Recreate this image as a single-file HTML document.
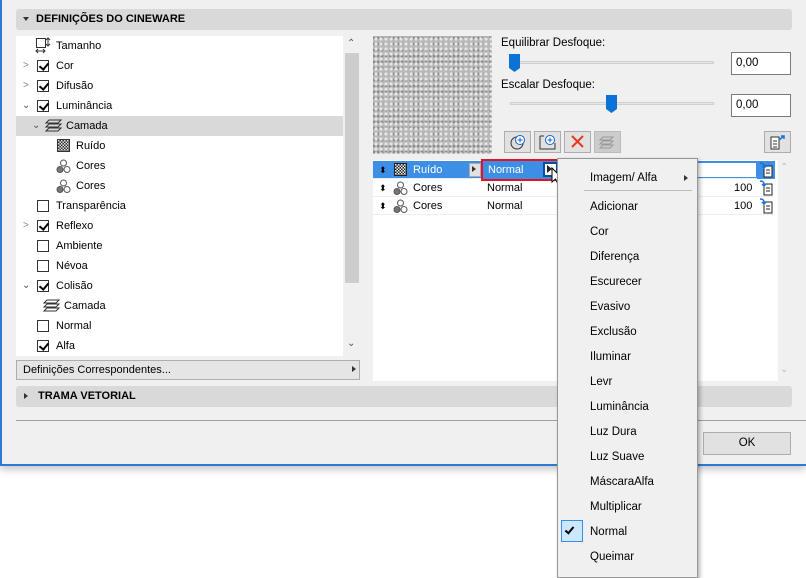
<!DOCTYPE html>
<html><head><meta charset="utf-8"><style>
*{box-sizing:border-box;margin:0;padding:0}
body{width:806px;height:568px;background:#fff;position:relative;overflow:hidden;font-family:"Liberation Sans","DejaVu Sans",sans-serif;font-size:11px;color:#000}
.a{position:absolute}
#dlg{left:0;top:0;width:806px;height:466px;background:#f0f0f0;border-left:2px solid #2b7bd3;border-bottom:2px solid #2b7bd3;box-shadow:0 3px 8px rgba(0,0,0,.25)}
.bar{background:#d9d9d9;border-radius:3px;font-weight:bold;font-size:11px;line-height:21px}
.row{position:absolute;left:0;height:20px;line-height:20px;width:327px}
.cb{position:absolute;width:12px;height:12px;border:1px solid #333;background:#fff;top:4px}
.cb.c::after{content:"";position:absolute;left:3px;top:0px;width:4px;height:7px;border-right:2px solid #000;border-bottom:2px solid #000;transform:rotate(40deg)}
.chev{position:absolute;top:0;color:#888;font-size:10px}
.mi{position:absolute;left:32px;font-size:11.5px}
.tr{position:absolute;left:0;width:400px;height:18px;line-height:18px;border-bottom:1px solid #eee}
.ic3{position:absolute;width:14px;height:14px}
.btn{position:absolute;top:131px;width:27px;height:22px;background:#e1e1e1;border:1px solid #adadad}
</style></head><body>
<div id="dlg" class="a">
 <div class="a bar" style="left:14px;top:9px;width:776px;height:21px;padding-left:20px">DEFINIÇÕES DO CINEWARE</div>
 <div class="a" style="left:21px;top:17px;border:3.5px solid transparent;border-top:4px solid #333"></div>
 <!-- left list -->
 <div class="a" style="left:14px;top:36px;width:327px;height:320px;background:#fff;font-size:11px">
  <div class="row" style="top:0"><svg class="a" style="left:19px;top:1px" width="16" height="17"><rect x="1.5" y="1.5" width="9" height="9" fill="none" stroke="#333"/><path d="M13 1v8M11 3l2-2 2 2M11 7l2 2 2-2M1 14h9M3 12l-2 2 2 2M8 12l2 2-2 2" stroke="#333" fill="none"/></svg><span class="a" style="left:40px">Tamanho</span></div>
  <div class="row" style="top:20px"><span class="chev" style="left:7px">&gt;</span><div class="cb c" style="left:21px"></div><span class="a" style="left:40px">Cor</span></div>
  <div class="row" style="top:40px"><span class="chev" style="left:7px">&gt;</span><div class="cb c" style="left:21px"></div><span class="a" style="left:40px">Difusão</span></div>
  <div class="row" style="top:60px"><span class="chev" style="left:6px;color:#555">⌄</span><div class="cb c" style="left:21px"></div><span class="a" style="left:40px">Luminância</span></div>
  <div class="row" style="top:80px;background:#d9d9d9"><span class="chev" style="left:16px;color:#555">⌄</span><svg class="a" style="left:29px;top:3px" width="17" height="14"><path d="M4 1h12l-3 3H1zM4 5h12l-3 3H1zM4 9h12l-3 3H1z" fill="none" stroke="#333"/></svg><span class="a" style="left:50px">Camada</span></div>
  <div class="row" style="top:100px"><div class="a" style="left:41px;top:3px;width:13px;height:13px;border:1px solid #333;background:repeating-conic-gradient(#333 0 25%,#ddd 0 50%) 0 0/3px 3px"></div><span class="a" style="left:60px">Ruído</span></div>
  <div class="row" style="top:120px"><svg class="a" style="left:40px;top:3px" width="15" height="15"><circle cx="7.5" cy="4" r="3" fill="#fff" stroke="#555"/><circle cx="4" cy="10.5" r="3" fill="#777" stroke="#555"/><circle cx="11" cy="10.5" r="3" fill="#fff" stroke="#555"/></svg><span class="a" style="left:60px">Cores</span></div>
  <div class="row" style="top:140px"><svg class="a" style="left:40px;top:3px" width="15" height="15"><circle cx="7.5" cy="4" r="3" fill="#fff" stroke="#555"/><circle cx="4" cy="10.5" r="3" fill="#777" stroke="#555"/><circle cx="11" cy="10.5" r="3" fill="#fff" stroke="#555"/></svg><span class="a" style="left:60px">Cores</span></div>
  <div class="row" style="top:160px"><div class="cb" style="left:21px"></div><span class="a" style="left:40px">Transparência</span></div>
  <div class="row" style="top:180px"><span class="chev" style="left:7px">&gt;</span><div class="cb c" style="left:21px"></div><span class="a" style="left:40px">Reflexo</span></div>
  <div class="row" style="top:200px"><div class="cb" style="left:21px"></div><span class="a" style="left:40px">Ambiente</span></div>
  <div class="row" style="top:220px"><div class="cb" style="left:21px"></div><span class="a" style="left:40px">Névoa</span></div>
  <div class="row" style="top:240px"><span class="chev" style="left:6px;color:#555">⌄</span><div class="cb c" style="left:21px"></div><span class="a" style="left:40px">Colisão</span></div>
  <div class="row" style="top:260px"><svg class="a" style="left:27px;top:3px" width="17" height="14"><path d="M4 1h12l-3 3H1zM4 5h12l-3 3H1zM4 9h12l-3 3H1z" fill="none" stroke="#333"/></svg><span class="a" style="left:48px">Camada</span></div>
  <div class="row" style="top:280px"><div class="cb" style="left:21px"></div><span class="a" style="left:40px">Normal</span></div>
  <div class="row" style="top:300px"><div class="cb c" style="left:21px"></div><span class="a" style="left:40px">Alfa</span></div>
 </div>
 <div class="a" style="left:341px;top:36px;width:16px;height:320px;background:#f0f0f0"></div>
 <div class="a" style="left:343px;top:53px;width:14px;height:230px;background:#cdcdcd"></div>
 <div class="a" style="left:345px;top:38px;font-size:10px;color:#555">⌃</div>
 <div class="a" style="left:345px;top:338px;font-size:10px;color:#555">⌄</div>
 <div class="a" style="left:14px;top:360px;width:344px;height:20px;background:#e5e5e5;border:1px solid #adadad;line-height:18px;padding-left:6px">Definições Correspondentes...</div>
 <div class="a" style="left:350px;top:366px;border:3.5px solid transparent;border-left:4px solid #333"></div>
 <!-- right -->
 <div class="a" style="left:371px;top:36px;width:119px;height:118px;background:#b8b8b8;background-image:radial-gradient(circle at 3px 3px,#e6e6e6 1.2px,transparent 2px),radial-gradient(circle at 1px 2px,#8a8a8a 1px,transparent 1.8px);background-size:5px 5px,4px 6px"></div>
 <div class="a" style="left:499px;top:37px;font-size:11.5px">Equilibrar Desfoque:</div>
 <div class="a" style="left:508px;top:61px;width:204px;height:3px;background:#e6e6e6;border:1px solid #d0d0d0"></div>
 <svg class="a" style="left:507px;top:54px" width="12" height="19"><path d="M0 0h11v14l-5.5 4L0 14z" fill="#0b72d6"/></svg>
 <div class="a" style="left:729px;top:52px;width:60px;height:23px;background:#fff;border:1px solid #7a7a7a;line-height:21px;padding-left:4px;font-size:11.5px">0,00</div>
 <div class="a" style="left:499px;top:79px;font-size:11.5px">Escalar Desfoque:</div>
 <div class="a" style="left:508px;top:102px;width:204px;height:3px;background:#e6e6e6;border:1px solid #d0d0d0"></div>
 <svg class="a" style="left:604px;top:95px" width="12" height="19"><path d="M0 0h11v14l-5.5 4L0 14z" fill="#0b72d6"/></svg>
 <div class="a" style="left:729px;top:94px;width:60px;height:23px;background:#fff;border:1px solid #7a7a7a;line-height:21px;padding-left:4px;font-size:11.5px">0,00</div>
 <div class="btn" style="left:502px"><svg width="25" height="20"><circle cx="12" cy="11" r="6" fill="#ddd" stroke="#333"/><circle cx="15" cy="8" r="4.5" fill="#fff" stroke="#1565c0"/><path d="M15 5.5v5M12.5 8h5" stroke="#1565c0"/></svg></div>
 <div class="btn" style="left:532px"><svg width="25" height="20"><path d="M5 4h4M5 4v13h15v-6" fill="none" stroke="#333"/><circle cx="15" cy="8" r="4.5" fill="#fff" stroke="#1565c0"/><path d="M15 5.5v5M12.5 8h5" stroke="#1565c0"/></svg></div>
 <div class="btn" style="left:562px"><svg width="25" height="20"><path d="M7 4l11 11M18 4L7 15" stroke="#e53a1f" stroke-width="2"/></svg></div>
 <div class="btn" style="left:592px;background:#ccc;border-color:#bbb"><svg width="25" height="20"><path d="M8 5h10l-3 3H5zM8 9h10l-3 3H5zM8 13h10l-3 3H5z" fill="none" stroke="#999"/></svg></div>
 <div class="btn" style="left:762px"><svg width="25" height="20"><path d="M6 5h8v12H6z" fill="#fff" stroke="#333"/><path d="M8 9h4M8 12h4M8 15h4" stroke="#333"/><path d="M14 8l5-4M16 4h3v3" stroke="#1a73d9" stroke-width="1.5" fill="none"/></svg></div>
 <!-- table -->
 <div class="a" style="left:371px;top:160px;width:419px;height:221px;background:#fff">
  <div class="tr" style="top:1px;background:#3d8fe6;color:#fff"><span class="a" style="left:6px;color:#000;font-size:9px">⬍</span><div class="a" style="left:21px;top:2px;width:13px;height:13px;border:1px solid #222;background:repeating-conic-gradient(#222 0 25%,#eee 0 50%) 0 0/3px 3px"></div><span class="a" style="left:40px">Ruído</span><div class="a" style="left:96px;top:2px;width:12px;height:14px;background:#e1e1e1;border:1px solid #aaa"></div><div class="a" style="left:99px;top:5px;border:3.5px solid transparent;border-left:4px solid #333"></div></div>
  <div class="tr" style="top:19px"><span class="a" style="left:6px;font-size:9px">⬍</span><svg class="a" style="left:20px;top:2px" width="15" height="15"><circle cx="7.5" cy="4" r="3" fill="#fff" stroke="#555"/><circle cx="4" cy="10.5" r="3" fill="#777" stroke="#555"/><circle cx="11" cy="10.5" r="3" fill="#fff" stroke="#555"/></svg><span class="a" style="left:40px">Cores</span><span class="a" style="left:114px">Normal</span><span class="a" style="left:361px">100</span></div>
  <div class="tr" style="top:37px"><span class="a" style="left:6px;font-size:9px">⬍</span><svg class="a" style="left:20px;top:2px" width="15" height="15"><circle cx="7.5" cy="4" r="3" fill="#fff" stroke="#555"/><circle cx="4" cy="10.5" r="3" fill="#777" stroke="#555"/><circle cx="11" cy="10.5" r="3" fill="#fff" stroke="#555"/></svg><span class="a" style="left:40px">Cores</span><span class="a" style="left:114px">Normal</span><span class="a" style="left:361px">100</span></div>
  <div class="a" style="left:312px;top:2px;width:72px;height:16px;background:#fff;border:1px solid #3d8fe6;line-height:14px">00</div>
  <div class="a" style="left:384px;top:1px;width:18px;height:18px;background:#3d8fe6"></div>
  <svg class="a" style="left:385px;top:1px" width="16" height="54"><g fill="none"><path d="M6 5h8v11H6z" fill="#fff" stroke="#222"/><path d="M8 9h4M8 12h4" stroke="#222"/><path d="M2 2c3 0 4 1 4 4M4 5l2 2 2-2" stroke="#1a73d9" stroke-width="1.5"/></g><g transform="translate(0,18)" fill="none"><path d="M6 5h8v11H6z" fill="#fff" stroke="#222"/><path d="M8 9h4M8 12h4" stroke="#222"/><path d="M2 2c3 0 4 1 4 4M4 5l2 2 2-2" stroke="#1a73d9" stroke-width="1.5"/></g><g transform="translate(0,36)" fill="none"><path d="M6 5h8v11H6z" fill="#fff" stroke="#222"/><path d="M8 9h4M8 12h4" stroke="#222"/><path d="M2 2c3 0 4 1 4 4M4 5l2 2 2-2" stroke="#1a73d9" stroke-width="1.5"/></g></svg>
  <div class="a" style="left:405px;top:0;width:14px;height:221px;background:#f0f0f0"></div>
  <div class="a" style="left:407px;top:2px;font-size:10px;color:#bbb">⌃</div>
  <div class="a" style="left:407px;top:204px;font-size:10px;color:#bbb">⌄</div>
 </div>
 <!-- red highlight -->
 <div class="a" style="left:479px;top:159px;width:82px;height:22px;border:2px solid #e81123;background:#3d8fe6;color:#fff;line-height:18px;padding-left:5px">Normal</div>
 <div class="a" style="left:541px;top:162px;width:15px;height:15px;border:2px solid #0b4f9c;background:#fff"></div>
 <div class="a" style="left:545px;top:165px;border:4px solid transparent;border-left:5px solid #222"></div>
 <svg class="a" style="left:549px;top:167px" width="12" height="19"><path d="M1 1v14l3.5-3 2.5 5 2-1-2.5-5H11z" fill="#fff" stroke="#000"/></svg>
 <div class="a bar" style="left:14px;top:386px;width:776px;height:21px;padding-left:22px">TRAMA VETORIAL</div>
 <div class="a" style="left:22px;top:393px;border:3.5px solid transparent;border-left:4px solid #333"></div>
 <div class="a" style="left:14px;top:420px;width:790px;height:1px;background:#a0a0a0"></div>
 <div class="a" style="left:701px;top:432px;width:88px;height:23px;background:#e1e1e1;border:1px solid #adadad;text-align:center;line-height:21px;font-size:11.5px">OK</div>
</div>
<!-- menu -->
<div class="a" style="left:557px;top:158px;width:141px;height:420px;background:#f0f0f0;border:1px solid #979797;box-shadow:2px 2px 4px rgba(0,0,0,.3)">
 <div class="mi" style="top:13px">Imagem/ Alfa</div>
 <div class="a" style="left:126px;top:16px;border:3.5px solid transparent;border-left:4px solid #333"></div>
 <div class="a" style="left:26px;top:31px;width:108px;height:1px;background:#bdbdbd"></div>
 <div class="mi" style="top:42px">Adicionar</div>
 <div class="mi" style="top:67px">Cor</div>
 <div class="mi" style="top:92px">Diferença</div>
 <div class="mi" style="top:117px">Escurecer</div>
 <div class="mi" style="top:142px">Evasivo</div>
 <div class="mi" style="top:167px">Exclusão</div>
 <div class="mi" style="top:192px">Iluminar</div>
 <div class="mi" style="top:217px">Levr</div>
 <div class="mi" style="top:242px">Luminância</div>
 <div class="mi" style="top:267px">Luz Dura</div>
 <div class="mi" style="top:292px">Luz Suave</div>
 <div class="mi" style="top:317px">MáscaraAlfa</div>
 <div class="mi" style="top:342px">Multiplicar</div>
 <div class="a" style="left:3px;top:361px;width:22px;height:22px;background:#cce8ff;border:1px solid #3a8ee6"></div>
 <div class="a" style="left:9px;top:366px;width:5px;height:9px;border-right:2px solid #000;border-bottom:2px solid #000;transform:rotate(40deg)"></div>
 <div class="mi" style="top:367px">Normal</div>
 <div class="mi" style="top:392px">Queimar</div>
</div>
</body></html>
